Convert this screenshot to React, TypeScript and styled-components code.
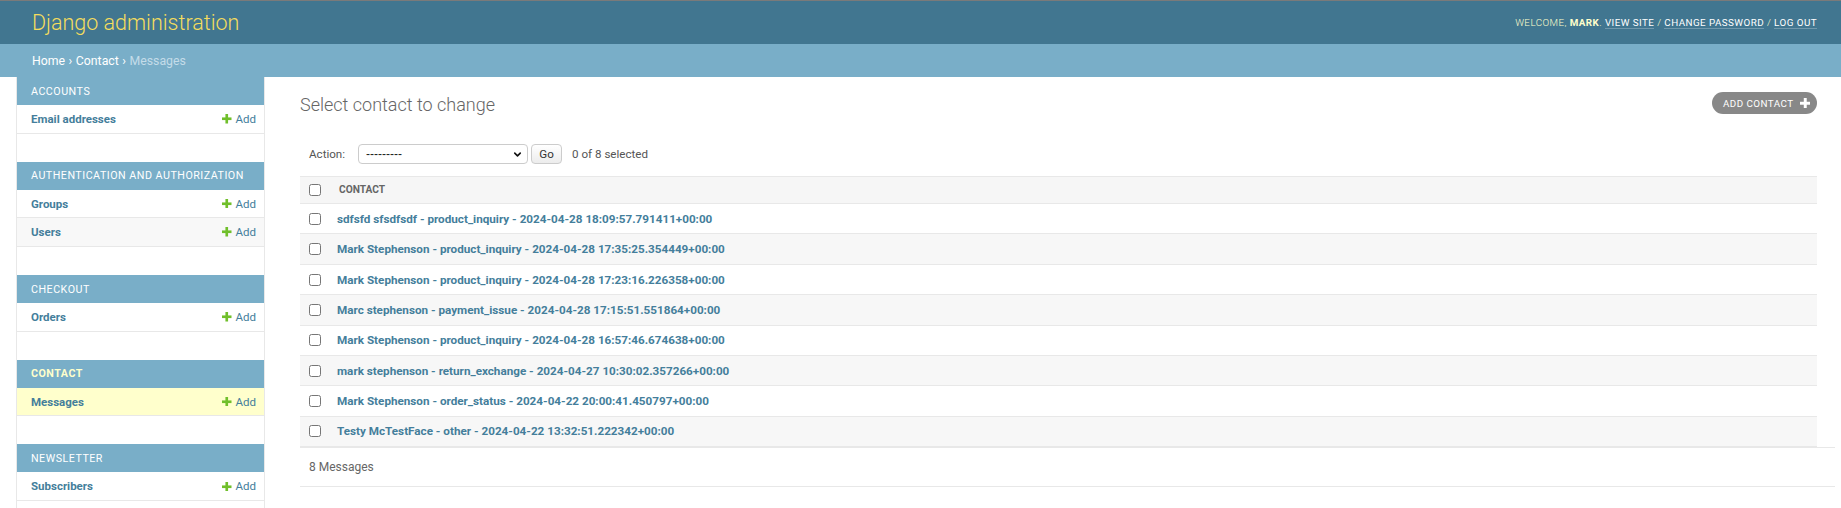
import React from 'react';
import styled, { createGlobalStyle } from 'styled-components';
import { ChevronDown } from 'lucide-react';

const GlobalStyle = createGlobalStyle`
	html, body {
		margin: 0;
		padding: 0;
		background: #fff;
	}
	body {
		font-family: Roboto, "Liberation Sans", Arial, sans-serif;
		color: #333;
	}
	* {
		box-sizing: border-box;
	}
`;

const Page = styled.div`
	display: flex;
	flex-direction: column;
	min-height: 100vh;
`;

const Header = styled.header`
	height: 44px;
	border-top: 1px solid #7a7a7a;
	background: #417690;
	display: flex;
	align-items: center;
	justify-content: space-between;
	padding: 0 24px 0 32px;
`;

const Branding = styled.h1`
	margin: 0;
	font-size: 21.5px;
	line-height: 24px;
	font-weight: 300;
	color: #f5dd5d;
`;

const UserTools = styled.div`
	font-size: 9.8px;
	letter-spacing: 0.45px;
	text-transform: uppercase;
	font-weight: 300;
	color: #ffc;

	strong {
		font-weight: 700;
	}
`;

const ToolLink = styled.a`
	color: #fff;
	text-decoration: none;
	font-weight: 400;
	border-bottom: 1px solid rgba(255, 255, 255, 0.25);
`;

const Breadcrumbs = styled.div`
	height: 33px;
	background: #79aec8;
	display: flex;
	align-items: center;
	padding: 0 32px;
	font-size: 12.3px;
	color: #fff;
`;

const Crumb = styled.span<{ $current?: boolean }>`
	color: ${({ $current }) => ($current ? '#c4dce8' : '#fff')};
`;

const Sep = styled.span`
	margin: 0 3.5px;
	color: #fff;
`;

const Main = styled.div`
	display: flex;
	flex: 1;
`;

const Toggle = styled.div`
	flex: 0 0 17px;
	border-right: 1px solid #e8e8e8;
`;

const Sidebar = styled.nav`
	flex: 0 0 248px;
	border-right: 1px solid #e8e8e8;
`;

const Module = styled.div`
	margin-bottom: 28px;
`;

const Caption = styled.div<{ $current?: boolean }>`
	height: 28px;
	display: flex;
	align-items: center;
	padding-left: 14px;
	background: #79aec8;
	font-size: 10.7px;
	letter-spacing: 0.5px;
	text-transform: uppercase;
	color: ${({ $current }) => ($current ? '#ffc' : '#fff')};
	font-weight: ${({ $current }) => ($current ? 700 : 400)};
`;

const ModelRow = styled.div<{ $current?: boolean; $alt?: boolean }>`
	height: 28.7px;
	display: flex;
	align-items: center;
	justify-content: space-between;
	padding: 0 8px 0 14px;
	border-bottom: 1px solid #e8e8e8;
	background: ${({ $current, $alt }) => ($current ? '#ffc' : $alt ? '#f8f8f8' : '#fff')};
`;

const ModelName = styled.a`
	font-size: 11.5px;
	font-weight: 700;
	color: #447e9b;
	text-decoration: none;
`;

const AddLink = styled.a`
	display: flex;
	align-items: center;
	gap: 4px;
	font-size: 11.5px;
	color: #447e9b;
	text-decoration: none;
`;

const Content = styled.main`
	flex: 1;
	min-width: 0;
	padding: 16px 24px 0 35px;
`;

const TitleRow = styled.div`
	display: flex;
	justify-content: space-between;
	align-items: flex-start;
`;

const Title = styled.h1`
	margin: 0;
	font-size: 18px;
	line-height: 24px;
	font-weight: 300;
	color: #666;
`;

const ObjectTool = styled.a`
	margin-top: -1px;
	height: 22.4px;
	display: flex;
	align-items: center;
	gap: 6px;
	padding: 0 7px 0 11px;
	border-radius: 12px;
	background: #888;
	color: #fff;
	font-size: 9.8px;
	letter-spacing: 0.45px;
	text-transform: uppercase;
	text-decoration: none;
`;

const Actions = styled.div`
	display: flex;
	align-items: center;
	height: 20px;
	margin-top: 27px;
	padding-left: 9px;
	font-size: 11.6px;
	color: #555;
`;

const Label = styled.label`
	margin-right: 13px;
`;

const SelectWrap = styled.div`
	position: relative;
	width: 170px;
	height: 20px;
`;

const Select = styled.select`
	appearance: none;
	width: 100%;
	height: 100%;
	border: 1px solid #ccc;
	border-radius: 4px;
	background: #fff;
	padding: 0 0 0 7px;
	font-family: "Liberation Sans", Arial, sans-serif;
	font-size: 12px;
	color: #222;
`;

const Chevron = styled.span`
	position: absolute;
	right: 5px;
	top: 5px;
	display: flex;
	pointer-events: none;
	color: #111;
`;

const GoButton = styled.button`
	margin-left: 3px;
	width: 31px;
	height: 20px;
	padding: 0;
	border: 1px solid #ccc;
	border-radius: 4px;
	background: linear-gradient(#fff, #ececec);
	font-family: inherit;
	font-size: 11.6px;
	color: #333;
`;

const Counter = styled.span`
	margin-left: 10px;
`;

const Results = styled.div`
	margin-top: 11.5px;
`;

const HeadRow = styled.div`
	height: 28.6px;
	display: flex;
	align-items: center;
	background: #f6f6f6;
	border-top: 1px solid #e8e8e8;
	border-bottom: 1px solid #e8e8e8;
`;

const CheckCell = styled.div`
	flex: 0 0 37px;
	display: flex;
	align-items: center;
	padding-left: 9px;
`;

const Check = styled.input`
	margin: 0;
	width: 12px;
	height: 12px;
`;

const HeadText = styled.div`
	padding-left: 2px;
	font-size: 10.2px;
	font-weight: 700;
	color: #666;
	text-transform: uppercase;
`;

const Row = styled.div<{ $alt?: boolean }>`
	height: 30.375px;
	display: flex;
	align-items: center;
	border-bottom: 1px solid #e8e8e8;
	background: ${({ $alt }) => ($alt ? '#f7f7f7' : '#fff')};
`;

const RowLink = styled.a`
	font-size: 11.7px;
	font-weight: 700;
	color: #447e9b;
	text-decoration: none;
`;

const Paginator = styled.div`
	height: 40px;
	margin-right: -18px;
	display: flex;
	align-items: center;
	padding-left: 9px;
	border-top: 1px solid #e8e8e8;
	border-bottom: 1px solid #e8e8e8;
	font-size: 12px;
	color: #666;
`;

const Plus = ({ color, size = 10 }: { color: string; size?: number }) => (
	<svg width={size} height={size} viewBox='0 0 10 10'>
		<rect x='3.6' y='0' width='2.8' height='10' fill={color} />
		<rect x='0' y='3.6' width='10' height='2.8' fill={color} />
	</svg>
);

const apps = [
	{ name: 'Accounts', models: ['Email addresses'] },
	{ name: 'Authentication and Authorization', models: ['Groups', 'Users'] },
	{ name: 'Checkout', models: ['Orders'] },
	{ name: 'Contact', models: ['Messages'], current: true },
	{ name: 'Newsletter', models: ['Subscribers'] },
];

const messages = [
	'sdfsfd sfsdfsdf - product_inquiry - 2024-04-28 18:09:57.791411+00:00',
	'Mark Stephenson - product_inquiry - 2024-04-28 17:35:25.354449+00:00',
	'Mark Stephenson - product_inquiry - 2024-04-28 17:23:16.226358+00:00',
	'Marc stephenson - payment_issue - 2024-04-28 17:15:51.551864+00:00',
	'Mark Stephenson - product_inquiry - 2024-04-28 16:57:46.674638+00:00',
	'mark stephenson - return_exchange - 2024-04-27 10:30:02.357266+00:00',
	'Mark Stephenson - order_status - 2024-04-22 20:00:41.450797+00:00',
	'Testy McTestFace - other - 2024-04-22 13:32:51.222342+00:00',
];

const App: React.FC = () => {
	return (
		<Page>
			<GlobalStyle />
			<Header>
				<Branding>Django administration</Branding>
				<UserTools>
					Welcome, <strong>Mark</strong>. <ToolLink href='#'>View site</ToolLink> /{' '}
					<ToolLink href='#'>Change password</ToolLink> / <ToolLink href='#'>Log out</ToolLink>
				</UserTools>
			</Header>
			<Breadcrumbs>
				<Crumb>Home</Crumb>
				<Sep>›</Sep>
				<Crumb>Contact</Crumb>
				<Sep>›</Sep>
				<Crumb $current>Messages</Crumb>
			</Breadcrumbs>
			<Main>
				<Toggle />
				<Sidebar>
					{apps.map((app) => (
						<Module key={app.name}>
							<Caption $current={app.current}>{app.name}</Caption>
							{app.models.map((model, i) => (
								<ModelRow
									key={model}
									$current={app.current}
									$alt={i % 2 === 1}
								>
									<ModelName href='#'>{model}</ModelName>
									<AddLink href='#'>
										<Plus color='#70bf2b' size={9.5} />
										Add
									</AddLink>
								</ModelRow>
							))}
						</Module>
					))}
				</Sidebar>
				<Content>
					<TitleRow>
						<Title>Select contact to change</Title>
						<ObjectTool href='#'>
							Add contact
							<Plus color='#fff' size={10.5} />
						</ObjectTool>
					</TitleRow>
					<Actions>
						<Label>Action:</Label>
						<SelectWrap>
							<Select defaultValue=''>
								<option value=''>---------</option>
								<option value='delete'>Delete selected messages</option>
							</Select>
							<Chevron>
								<ChevronDown size={11} strokeWidth={3.5} />
							</Chevron>
						</SelectWrap>
						<GoButton>Go</GoButton>
						<Counter>0 of 8 selected</Counter>
					</Actions>
					<Results>
						<HeadRow>
							<CheckCell>
								<Check type='checkbox' />
							</CheckCell>
							<HeadText>Contact</HeadText>
						</HeadRow>
						{messages.map((msg, i) => (
							<Row key={msg} $alt={i % 2 === 1}>
								<CheckCell>
									<Check type='checkbox' />
								</CheckCell>
								<RowLink href='#'>{msg}</RowLink>
							</Row>
						))}
					</Results>
					<Paginator>8 Messages</Paginator>
				</Content>
			</Main>
		</Page>
	);
};

export default App;
